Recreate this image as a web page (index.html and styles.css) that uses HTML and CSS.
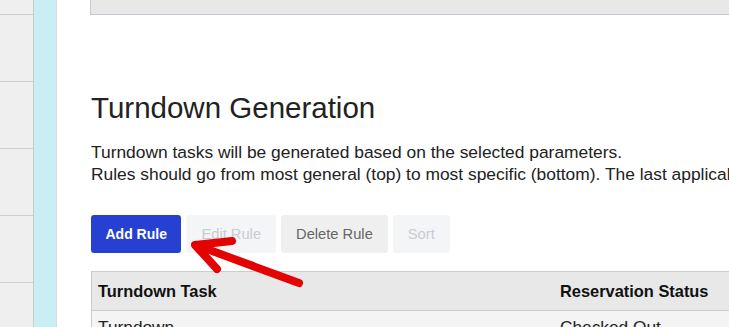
FILE: index.html
```html
<!DOCTYPE html>
<html lang="en">
<head>
    <meta charset="UTF-8">
    <meta name="viewport" content="width=device-width, initial-scale=1.0">
    <title>Turndown Generation</title>
    <link rel="stylesheet" href="styles.css">
</head>
<body>
    <div class="layout">
        <div class="sidebar">
            <div class="side-row first"></div>
            <div class="side-row"></div>
            <div class="side-row"></div>
            <div class="side-row"></div>
            <div class="side-row"></div>
            <div class="side-row"></div>
        </div>
        <div class="strip"></div>
        <div class="main">
            <div class="top-box"></div>

            <h1>Turndown Generation</h1>
            <p class="intro">
                Turndown tasks will be generated based on the selected parameters.<br>
                Rules should go from most general (top) to most specific (bottom). The last applicable rule wins.
            </p>

            <div class="actions">
                <button class="btn primary">Add Rule</button>
                <button class="btn disabled">Edit Rule</button>
                <button class="btn">Delete Rule</button>
                <button class="btn disabled">Sort</button>
            </div>

            <table class="rules">
                <thead>
                    <tr>
                        <th class="col-task">Turndown Task</th>
                        <th>Reservation Status</th>
                    </tr>
                </thead>
                <tbody>
                    <tr>
                        <td>Turndown</td>
                        <td>Checked Out</td>
                    </tr>
                </tbody>
            </table>
        </div>
    </div>

    <svg class="arrow" width="729" height="327" viewBox="0 0 729 327">
        <g stroke="#e40303" stroke-width="8" stroke-linecap="round" stroke-linejoin="round" fill="none">
            <line x1="299" y1="283" x2="196" y2="245"/>
            <polyline points="232,241 195,245 217,269"/>
        </g>
    </svg>
</body>
</html>
```

FILE: styles.css
```css
body {
    margin: 0;
    font-family: "Liberation Sans", Arial, sans-serif;
    color: #222;
    background-color: #fff;
    overflow: hidden;
}
.layout {
    display: flex;
    height: 327px;
}
.sidebar {
    width: 33px;
    background-color: #efefef;
    border-right: 1px solid #c9c9c9;
}
.side-row {
    height: 66px;
    border-bottom: 1px solid #cfcfcf;
}
.side-row.first {
    height: 14px;
}
.strip {
    width: 22px;
    background-color: #c9eff4;
    border-right: 1px solid #d8dcdc;
}
.main {
    flex: 1;
    padding-left: 34px;
    min-width: 0;
}
.top-box {
    height: 14px;
    margin-left: -1px;
    background-color: #e8e8e8;
    border-left: 1px solid #c3cad3;
    border-bottom: 1px solid #c3cad3;
}
h1 {
    margin: 75px 0 0 0;
    font-size: 29.5px;
    font-weight: normal;
    line-height: 36px;
    color: #222;
}
.intro {
    margin: 15px 0 0 0;
    font-size: 17.4px;
    line-height: 22px;
    white-space: nowrap;
}
.actions {
    display: flex;
    gap: 5px;
    margin: 30px 0 0 0;
}
.btn {
    height: 38px;
    padding: 0 15px;
    border: none;
    border-radius: 3px;
    font-family: "Liberation Sans", Arial, sans-serif;
    font-size: 14.7px;
    background-color: #efefef;
    color: #666;
}
.btn.primary {
    padding: 0 14.5px;
    background-color: #2641d1;
    color: #fff;
    font-size: 14px;
    font-weight: bold;
}
.btn.disabled {
    background-color: #f4f5f7;
    color: #c8ccd3;
}
.rules {
    margin: 18px 0 0 0;
    width: 700px;
    border-collapse: collapse;
    border-left: 1px solid #ccc;
    border-top: 1px solid #ccc;
}
.rules th {
    height: 38px;
    padding: 0 6px;
    text-align: left;
    font-size: 16.4px;
    background-color: #e8e8e8;
    border-bottom: 1px solid #ccc;
    color: #111;
}
.rules .col-task {
    width: 450px;
}
.rules td {
    padding: 6px 6px;
    font-size: 17.3px;
    background-color: #f4f4f4;
}
.arrow {
    position: absolute;
    left: 0;
    top: 0;
    pointer-events: none;
}
```
